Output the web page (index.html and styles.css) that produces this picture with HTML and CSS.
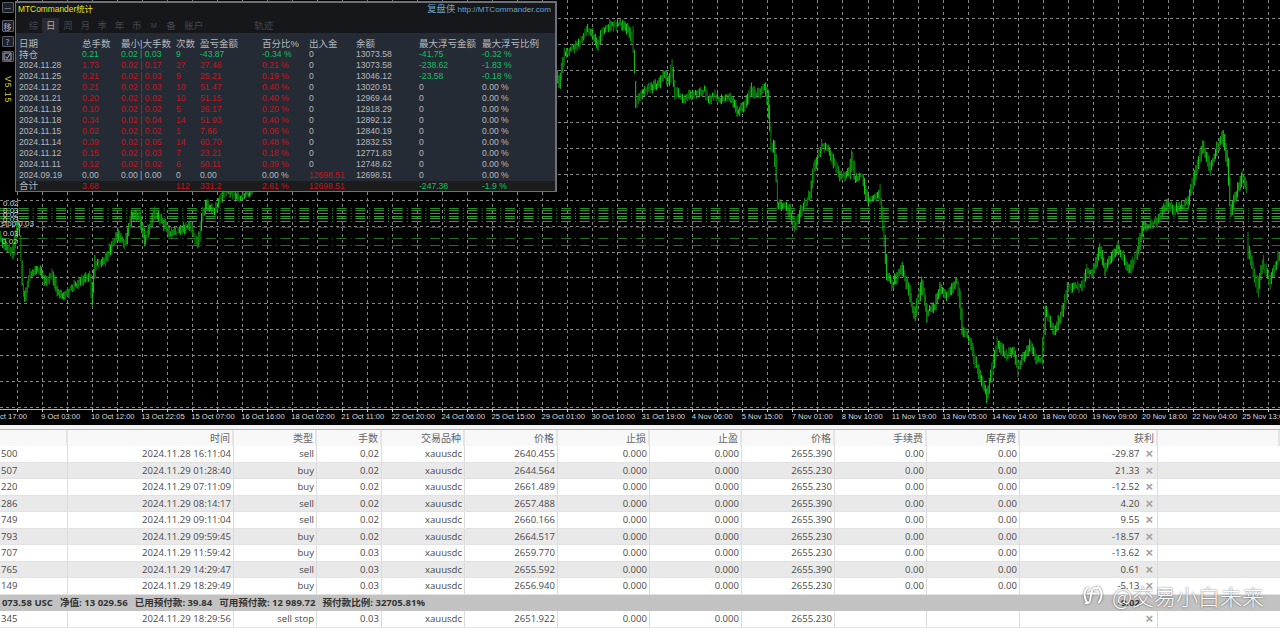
FILE: index.html
```html
<!DOCTYPE html>
<html lang="zh">
<head>
<meta charset="utf-8">
<title>MTCommander</title>
<link rel="stylesheet" href="styles.css">
</head>
<body>
<div class="page">
  <section class="chart">
    <svg id="plot" class="plot" width="1280" height="425" viewBox="0 0 1280 425"></svg>

    <div class="orders">
      <span class="o1">0.02</span><span class="o2">0.03</span><span class="o3">0.02</span><span class="o4">0.03</span>
      <span class="o5">stop 0.03</span><span class="o6">0.03</span><span class="o7">0.02</span>
    </div>

    <aside class="tools">
      <span class="tool">—</span>
      <span class="tool tool-gap">移</span>
      <span class="tool">?</span>
      <span class="tool"><svg width="9" height="9" viewBox="0 0 9 9"><path d="M1 1h7v7H1zM2.500 4.500l1.500 2 3-4.500" fill="none" stroke="#aab" stroke-width="1"/></svg></span>
      <span class="version">V5.15</span>
    </aside>

    <div class="panel">
      <div class="panel-top">
        <span class="panel-title">MTCommander统计</span>
        <span class="panel-link"><b>复盘侠</b> http://MTCommander.com</span>
      </div>
      <div class="tabs">
        <span class="tab">综</span><span class="tab tab-on">日</span><span class="tab">周</span><span class="tab">月</span><span class="tab">季</span><span class="tab">年</span><span class="tab">币</span><span class="tab tab-m">M</span><span class="tab">备</span><span class="tab tab-wide">账户</span><span class="tab tab-far">轨迹</span>
      </div>
      <div class="stats">
        <div class="st st-head"><span>日期</span><span>总手数</span><span>最小|大手数</span><span>次数</span><span>盈亏金额</span><span>百分比%</span><span>出入金</span><span>余额</span><span>最大浮亏金额</span><span>最大浮亏比例</span></div>
        <div class="st"><span class="cn">持仓</span><span class="g">0.21</span><span class="g">0.02 | 0.03</span><span class="g">9</span><span class="g">-43.87</span><span class="g">-0.34 %</span><span>0</span><span>13073.58</span><span class="g">-41.75</span><span class="g">-0.32 %</span></div>
        <div class="st"><span>2024.11.28</span><span class="r">1.73</span><span class="r">0.02 | 0.17</span><span class="r">27</span><span class="r">27.46</span><span class="r">0.21 %</span><span>0</span><span>13073.58</span><span class="g">-238.62</span><span class="g">-1.83 %</span></div>
        <div class="st"><span>2024.11.25</span><span class="r">0.21</span><span class="r">0.02 | 0.03</span><span class="r">9</span><span class="r">25.21</span><span class="r">0.19 %</span><span>0</span><span>13046.12</span><span class="g">-23.58</span><span class="g">-0.18 %</span></div>
        <div class="st"><span>2024.11.22</span><span class="r">0.21</span><span class="r">0.02 | 0.03</span><span class="r">10</span><span class="r">51.47</span><span class="r">0.40 %</span><span>0</span><span>13020.91</span><span>0</span><span>0.00 %</span></div>
        <div class="st"><span>2024.11.21</span><span class="r">0.20</span><span class="r">0.02 | 0.02</span><span class="r">10</span><span class="r">51.15</span><span class="r">0.40 %</span><span>0</span><span>12969.44</span><span>0</span><span>0.00 %</span></div>
        <div class="st"><span>2024.11.19</span><span class="r">0.10</span><span class="r">0.02 | 0.02</span><span class="r">5</span><span class="r">26.17</span><span class="r">0.20 %</span><span>0</span><span>12918.29</span><span>0</span><span>0.00 %</span></div>
        <div class="st"><span>2024.11.18</span><span class="r">0.34</span><span class="r">0.02 | 0.04</span><span class="r">14</span><span class="r">51.93</span><span class="r">0.40 %</span><span>0</span><span>12892.12</span><span>0</span><span>0.00 %</span></div>
        <div class="st"><span>2024.11.15</span><span class="r">0.02</span><span class="r">0.02 | 0.02</span><span class="r">1</span><span class="r">7.66</span><span class="r">0.06 %</span><span>0</span><span>12840.19</span><span>0</span><span>0.00 %</span></div>
        <div class="st"><span>2024.11.14</span><span class="r">0.39</span><span class="r">0.02 | 0.05</span><span class="r">14</span><span class="r">60.70</span><span class="r">0.48 %</span><span>0</span><span>12832.53</span><span>0</span><span>0.00 %</span></div>
        <div class="st"><span>2024.11.12</span><span class="r">0.15</span><span class="r">0.02 | 0.03</span><span class="r">7</span><span class="r">23.21</span><span class="r">0.18 %</span><span>0</span><span>12771.83</span><span>0</span><span>0.00 %</span></div>
        <div class="st"><span>2024.11.11</span><span class="r">0.12</span><span class="r">0.02 | 0.02</span><span class="r">6</span><span class="r">50.11</span><span class="r">0.39 %</span><span>0</span><span>12748.62</span><span>0</span><span>0.00 %</span></div>
        <div class="st"><span>2024.09.19</span><span>0.00</span><span>0.00 | 0.00</span><span>0</span><span>0.00</span><span>0.00 %</span><span class="r">12698.51</span><span>12698.51</span><span>0</span><span>0.00 %</span></div>
        <div class="st st-foot"><span class="cn">合计</span><span class="r">3.68</span><span></span><span class="r">112</span><span class="r">331.2</span><span class="r">2.61 %</span><span class="r">12698.51</span><span></span><span class="g">-247.38</span><span class="g">-1.9 %</span></div>
      </div>
    </div>

    <div class="axis">
      <span class="first">ct 17:00</span><span>9 Oct 03:00</span><span>10 Oct 12:00</span><span>13 Oct 22:05</span><span>15 Oct 07:00</span><span>16 Oct 16:00</span><span>18 Oct 02:00</span><span>21 Oct 11:00</span><span>22 Oct 20:00</span><span>24 Oct 06:00</span><span>25 Oct 15:00</span><span>29 Oct 01:00</span><span>30 Oct 10:00</span><span>31 Oct 19:00</span><span>4 Nov 06:00</span><span>5 Nov 15:00</span><span>7 Nov 01:00</span><span>8 Nov 10:00</span><span>11 Nov 19:00</span><span>13 Nov 05:00</span><span>14 Nov 14:00</span><span>18 Nov 00:00</span><span>19 Nov 09:00</span><span>20 Nov 18:00</span><span>22 Nov 04:00</span><span>25 Nov 13:00</span>
    </div>
  </section>

  <div class="divider"></div>

  <section class="trades">
    <div class="row head"><span></span><span>时间</span><span>类型</span><span>手数</span><span>交易品种</span><span>价格</span><span>止损</span><span>止盈</span><span>价格</span><span>手续费</span><span>库存费</span><span>获利</span><span></span></div>
    <div class="row"><span class="id">500</span><span>2024.11.28 16:11:04</span><span>sell</span><span>0.02</span><span>xauusdc</span><span>2640.455</span><span>0.000</span><span>0.000</span><span>2655.390</span><span>0.00</span><span>0.00</span><span class="pl">-29.87<i>×</i></span><span></span></div>
    <div class="row alt"><span class="id">507</span><span>2024.11.29 01:28:40</span><span>buy</span><span>0.02</span><span>xauusdc</span><span>2644.564</span><span>0.000</span><span>0.000</span><span>2655.230</span><span>0.00</span><span>0.00</span><span class="pl">21.33<i>×</i></span><span></span></div>
    <div class="row"><span class="id">220</span><span>2024.11.29 07:11:09</span><span>buy</span><span>0.02</span><span>xauusdc</span><span>2661.489</span><span>0.000</span><span>0.000</span><span>2655.230</span><span>0.00</span><span>0.00</span><span class="pl">-12.52<i>×</i></span><span></span></div>
    <div class="row alt"><span class="id">286</span><span>2024.11.29 08:14:17</span><span>sell</span><span>0.02</span><span>xauusdc</span><span>2657.488</span><span>0.000</span><span>0.000</span><span>2655.390</span><span>0.00</span><span>0.00</span><span class="pl">4.20<i>×</i></span><span></span></div>
    <div class="row"><span class="id">749</span><span>2024.11.29 09:11:04</span><span>sell</span><span>0.02</span><span>xauusdc</span><span>2660.166</span><span>0.000</span><span>0.000</span><span>2655.390</span><span>0.00</span><span>0.00</span><span class="pl">9.55<i>×</i></span><span></span></div>
    <div class="row alt"><span class="id">793</span><span>2024.11.29 09:59:45</span><span>buy</span><span>0.02</span><span>xauusdc</span><span>2664.517</span><span>0.000</span><span>0.000</span><span>2655.230</span><span>0.00</span><span>0.00</span><span class="pl">-18.57<i>×</i></span><span></span></div>
    <div class="row"><span class="id">707</span><span>2024.11.29 11:59:42</span><span>buy</span><span>0.03</span><span>xauusdc</span><span>2659.770</span><span>0.000</span><span>0.000</span><span>2655.230</span><span>0.00</span><span>0.00</span><span class="pl">-13.62<i>×</i></span><span></span></div>
    <div class="row alt"><span class="id">765</span><span>2024.11.29 14:29:47</span><span>sell</span><span>0.03</span><span>xauusdc</span><span>2655.592</span><span>0.000</span><span>0.000</span><span>2655.390</span><span>0.00</span><span>0.00</span><span class="pl">0.61<i>×</i></span><span></span></div>
    <div class="row"><span class="id">149</span><span>2024.11.29 18:29:49</span><span>buy</span><span>0.03</span><span>xauusdc</span><span>2656.940</span><span>0.000</span><span>0.000</span><span>2655.230</span><span>0.00</span><span>0.00</span><span class="pl">-5.13<i>×</i></span><span></span></div>
    <div class="summary">
      <div class="summary-text"><span>13 073.58 USC</span><span>净值: 13 029.56</span><span>已用预付款: 39.84</span><span>可用预付款: 12 989.72</span><span>预付款比例: 32705.81%</span></div>
      <div class="summary-pl">-9.02</div>
    </div>
    <div class="row last"><span class="id">345</span><span>2024.11.29 18:29:56</span><span>sell stop</span><span>0.03</span><span>xauusdc</span><span>2651.922</span><span>0.000</span><span>0.000</span><span>2655.230</span><span></span><span></span><span class="pl"><i>×</i></span><span></span></div>
  </section>

  <div class="watermark">
    <svg width="22" height="22" viewBox="0 0 30 30"><path d="M8 5C2 10 2 20 8 26M22 4c6 5 6 15 1 21M21 6c-4-2-7 0-8 5l-2 11c-1 4-3 5-6 4M8 13h11" fill="none" stroke="#fff" stroke-width="2.500" stroke-linecap="round"/></svg>
    <span>@交易小白未来</span>
  </div>
</div>
<script src="chart.js"></script>
</body>
</html>
```
FILE: styles.css
```css
* { box-sizing: border-box; }
html, body { margin: 0; height: 100%; overflow: hidden; background: #fff; }
.page { position: relative; width: 1280px; height: 633px; overflow: hidden; font-family: "Open Sans", "Noto Sans CJK SC", sans-serif; }

/* chart */
.chart { position: relative; height: 425px; background: #000; overflow: hidden; }
.plot { display: block; filter: blur(.35px); }

.orders span { position: absolute; left: 3px; font: 8px/8px "Liberation Sans", sans-serif; color: #d8d8d8; white-space: nowrap; }
.o1 { top: 200px; } .o2 { top: 207px; } .o3 { top: 211px; } .o4 { top: 216px; }
.orders .o5 { top: 220px; left: 1px; } .o6 { top: 230px; } .orders .o7 { top: 238px; left: 2px; color: #9fe89f; }

.tools { position: absolute; left: 0; top: 0; width: 15px; height: 192px; display: flex; flex-direction: column; align-items: center; padding-top: 2px; gap: 4px; background: #000; }
.tool { flex: none; width: 12px; height: 11px; border: 1px solid #59606c; border-radius: 1px; background: #1c2027; color: #aab; font: 8px/9px "Noto Sans CJK SC", sans-serif; text-align: center; display: flex; align-items: center; justify-content: center; }
.tool-gap { margin-top: 3px; height: 12px; }
.tool svg { display: block; }
.version { writing-mode: vertical-rl; color: #d8d820; font: 8.500px/10px "Liberation Sans", sans-serif; margin-top: 10px; letter-spacing: 1px; }

.panel { position: absolute; left: 15px; top: 1px; width: 542px; height: 191px; background: #15171b; border: 1px solid #6c7078; border-width: 2px 2px 2px 1px; color: #b4b8be; font: 8.600px/11px "Liberation Sans", "Noto Sans CJK SC", sans-serif; display: flex; flex-direction: column; }
.panel-top { flex: none; display: flex; justify-content: space-between; align-items: center; height: 13px; padding: 0 4px 0 2px; }
.panel-title { color: #e6e61a; font-size: 8.400px; }
.panel-link { color: #6ea6c8; font-size: 8.100px; }
.panel-link b { font-weight: 400; font-size: 9.300px; }
.tabs { flex: none; display: flex; height: 17px; padding: 2px 0 0 9px; font-size: 9.500px; line-height: 15px; color: #43474d; }
.tab { width: 17.200px; text-align: center; }
.tab-on { color: #a8acb2; background: #262b34; }
.tab-m { font-size: 7px; }
.tab-wide { width: 24px; margin-left: 2px; }
.tab-far { width: 24px; margin-left: 46px; }
.stats { flex: 1; min-height: 0; background: #252b34; padding-top: 5px; display: flex; flex-direction: column; }
.st { flex: none; display: grid; grid-template-columns: 63px 39px 55px 24px 62px 47px 47px 63px 63px 1fr; padding-left: 3px; height: 11px; white-space: nowrap; }
.st-head { font-size: 9.500px; color: #b4b8be; }
.cn { font-size: 9.500px; }
.g { color: #12c060; }
.r { color: #c8141e; }
.st-foot { flex: 1; background: #1c1c1c; line-height: 10px; }

.axis { position: absolute; left: -9px; top: 412px; display: flex; font: 7.600px/10px "Liberation Sans", sans-serif; color: #dcdcdc; white-space: nowrap; }
.axis span { width: 50.050px; flex: none; }
.axis .first { text-indent: 9px; }

.divider { height: 5px; background: #f4f4f4; border-bottom: 1px solid #b9b9b9; }

/* trades */
.trades { font-size: 9.550px; color: #4a4a4a; }
.row { display: grid; grid-template-columns: 68px 166px 83px 65px 83px 93px 92px 92px 93px 92px 93px 138px 1fr; height: 16.500px; line-height: 16px; background: #fff; border-bottom: 1px solid #e2e2e2; }
.row > span { text-align: right; padding-right: 2px; border-right: 1px solid #dcdcdc; white-space: nowrap; overflow: hidden; }
.row > span:last-child { border-right: 0; }
.row > .id { text-align: left; padding-left: 1px; }
.row.alt { background: #e9e9e9; }
.row.head { height: 16px; line-height: 16px; background: #f8f8f8; color: #666; font-size: 10px; border-bottom: 0; }
.row.head > span { border-right: 2px solid #e4e4e4; }
.row.last { background: #fff; border-bottom: 1px solid #e4e4e4; }
.pl i { font-style: normal; font-family: "Liberation Sans", sans-serif; font-weight: 700; color: #a0a0a0; font-size: 13px; line-height: 14px; margin-left: 6px; margin-right: 2px; vertical-align: -1px; }

.summary { position: relative; height: 16.500px; background: #c2c2c2; font-weight: 700; color: #333; overflow: hidden; line-height: 16px; }
.summary-text { display: flex; justify-content: flex-end; gap: 7px; width: 425px; white-space: nowrap; overflow: hidden; }
.summary-text span { flex: none; }
.summary-pl { position: absolute; left: 1115px; top: 0; width: 25px; text-align: right; }

.watermark { position: absolute; left: 1082px; top: 581px; display: flex; align-items: center; gap: 8px; height: 28px; color: #fff; font: 300 22px/28px "Noto Sans CJK SC", sans-serif; text-shadow: 0 0 2px rgba(0,0,0,.7); white-space: nowrap; }
.watermark svg { display: block; filter: drop-shadow(0 0 1px rgba(0,0,0,.6)); }
```
FILE: chart.js
```js
(function () {
  var NS = 'http://www.w3.org/2000/svg';
  var svg = document.getElementById('plot');

  function add(tag, attrs) {
    var el = document.createElementNS(NS, tag);
    for (var k in attrs) el.setAttribute(k, attrs[k]);
    svg.appendChild(el);
  }

  // grid
  var gridV = '', gridH = '';
  for (var x = 16.5; x < 1280; x += 25.03) gridV += 'M' + Math.round(x) + '.5 0V409';
  for (var y = 18; y < 409; y += 25.95) gridH += 'M0 ' + Math.round(y) + '.5H1280';
  add('path', { d: gridV, stroke: '#858585', 'stroke-width': 1, 'stroke-dasharray': '3 3', fill: 'none' });
  add('path', { d: gridH, stroke: '#858585', 'stroke-width': 1, 'stroke-dasharray': '3 3', fill: 'none' });

  // pending-order level lines
  [[208, '#2a8a2a'], [210, '#2a8a2a'], [213, '#349a34'], [216, '#349a34'], [218, '#349a34'], [221, '#349a34'], [227, '#1a5a1a'], [238, '#236f23'], [245, '#236f23']].forEach(function (l) {
    add('line', { x1: 0, x2: 1280, y1: l[0] + 0.5, y2: l[0] + 0.5, stroke: l[1], 'stroke-width': 1, 'stroke-dasharray': '10 4 1 3.700' });
  });

  // axis
  add('path', { d: 'M0 409.500H1280', stroke: '#bdbdbd', 'stroke-width': 1, fill: 'none' });
  var ticks = '';
  for (var t = 16.5; t < 1280; t += 25.03) ticks += 'M' + Math.round(t) + '.5 409v3';
  add('path', { d: ticks, stroke: '#d0d0d0', fill: 'none' });

  // price path: key points read from the picture
  var p = [[0,238],[8,250],[13,250],[18,226],[20,232],[23,290],[25,297],[30,275],[35,270],[40,270],[45,282],[52,275],[58,292],[65,296],[75,285],[85,278],[90,275],[92,296],[95,265],[105,262],[112,245],[118,235],[125,245],[132,215],[140,218],[145,240],[155,212],[165,225],[170,235],[180,230],[190,225],[198,245],[203,215],[207,205],[215,210],[225,190],[240,197],[250,192],[270,150],[400,110],[500,100],[555,70],[560,83],[565,52],[572,50],[580,43],[587,28],[592,34],[598,44],[604,30],[610,26],[620,24],[628,30],[633,40],[635,70],[636,104],[642,92],[650,88],[658,85],[665,73],[669,82],[672,68],[675,90],[680,95],[685,100],[690,95],[700,92],[705,90],[708,100],[715,95],[720,100],[730,97],[735,105],[738,112],[745,105],[752,90],[755,95],[760,93],[765,88],[768,100],[770,125],[772,150],[774,145],[776,165],[778,205],[785,205],[790,212],[795,228],[803,207],[810,195],[815,165],[822,146],[826,146],[830,152],[835,165],[840,175],[845,175],[850,172],[852,155],[855,178],[862,177],[868,200],[880,195],[883,220],[887,273],[892,285],[902,268],[908,287],[915,316],[922,284],[927,312],[935,305],[940,288],[947,296],[957,282],[960,300],[963,330],[970,340],[975,360],[987,395],[995,357],[998,342],[1007,357],[1013,350],[1018,368],[1030,345],[1037,360],[1042,358],[1046,312],[1055,331],[1063,310],[1068,288],[1082,286],[1087,272],[1093,273],[1100,250],[1105,268],[1118,247],[1130,271],[1137,254],[1143,228],[1157,222],[1167,203],[1175,210],[1188,202],[1203,146],[1210,168],[1223,135],[1228,163],[1231,210],[1243,176],[1247,190],[1248,245],[1258,290],[1263,262],[1270,282],[1280,254]];

  var seed = 12345;
  function rnd() { seed = (seed * 16807) % 2147483647; return seed / 2147483647; }

  var bright = '', dark = '', idx = 0;
  for (var bx = 0; bx < 1280; bx += 1.3) {
    while (idx < p.length - 2 && p[idx + 1][0] < bx) idx++;
    var a = p[idx], b = p[idx + 1];
    var f = (bx - a[0]) / (b[0] - a[0]);
    var slope = Math.abs(b[1] - a[1]) / Math.max(1, b[0] - a[0]);
    var my = a[1] + (b[1] - a[1]) * f + (rnd() - 0.5) * 4;
    var h = 1.5 + rnd() * 3.5 + Math.min(slope, 10);
    var seg = 'M' + bx.toFixed(1) + ' ' + (my - h).toFixed(1) + 'V' + (my + h).toFixed(1);
    if (rnd() > 0.4) bright += seg; else dark += seg;
  }
  add('path', { d: dark, stroke: '#0b8a0b', 'stroke-width': 1, fill: 'none' });
  add('path', { d: bright, stroke: '#16cc16', 'stroke-width': 1, fill: 'none' });
})();
```
